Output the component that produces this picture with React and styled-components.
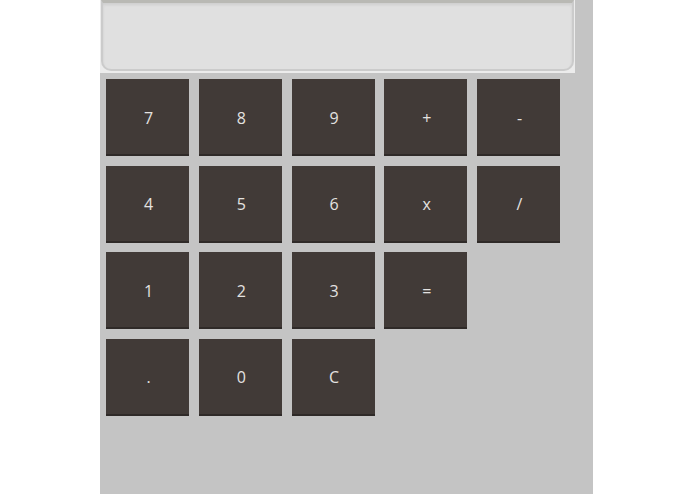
import { Fragment } from 'react'
import styled, { createGlobalStyle } from 'styled-components'

const GlobalStyle = createGlobalStyle`
    html, body {
        margin: 0;
        padding: 0;
        background: #ffffff;
    }
`

const Screen = styled.div`
    width: 493px;
    height: 494px;
    margin-left: 100px;
    background: #c4c4c4;
    overflow: hidden;
`

const DisplayFrame = styled.div`
    width: 474px;
    padding: 0 1px 2px 0;
    background: #ececec;
`

const Display = styled.div`
    height: 66px;
    margin-left: 1px;
    background: #e0e0e0;
    border: 2px solid #cbcbcb;
    border-top: 3px solid #b9b9b4;
    border-radius: 0 0 10px 10px;
    box-shadow: inset 0 2px 3px rgba(0, 0, 0, 0.08);
`

const Keypad = styled.div`
    display: grid;
    grid-template-columns: repeat(5, 83px);
    grid-auto-rows: 77px;
    column-gap: 9.75px;
    row-gap: 9.5px;
    padding: 6px 0 0 6px;
`

const Key = styled.button`
    display: flex;
    align-items: center;
    justify-content: center;
    margin: 0;
    padding: 2px 0 0 2px;
    border: none;
    border-bottom: 2px solid #2f2a28;
    background: #413a37;
    color: #e4e2e0;
    font-family: "Open Sans", "Noto Sans", sans-serif;
    font-size: 16px;
    cursor: pointer;
`

const Blank = styled.span``

const rows = [
    ['7', '8', '9', '+', '-'],
    ['4', '5', '6', 'x', '/'],
    ['1', '2', '3', '='],
    ['.', '0', 'C'],
]

const App = () => {
    return (
        <>
            <GlobalStyle />
            <Screen>
                <DisplayFrame>
                    <Display />
                </DisplayFrame>
                <Keypad>
                    {rows.map((row, r) => (
                        <Fragment key={r}>
                            {row.map((label) => (
                                <Key key={label}>{label}</Key>
                            ))}
                            {Array.from({ length: 5 - row.length }).map((_, i) => (
                                <Blank key={`gap-${r}-${i}`} />
                            ))}
                        </Fragment>
                    ))}
                </Keypad>
            </Screen>
        </>
    )
}

export default App
